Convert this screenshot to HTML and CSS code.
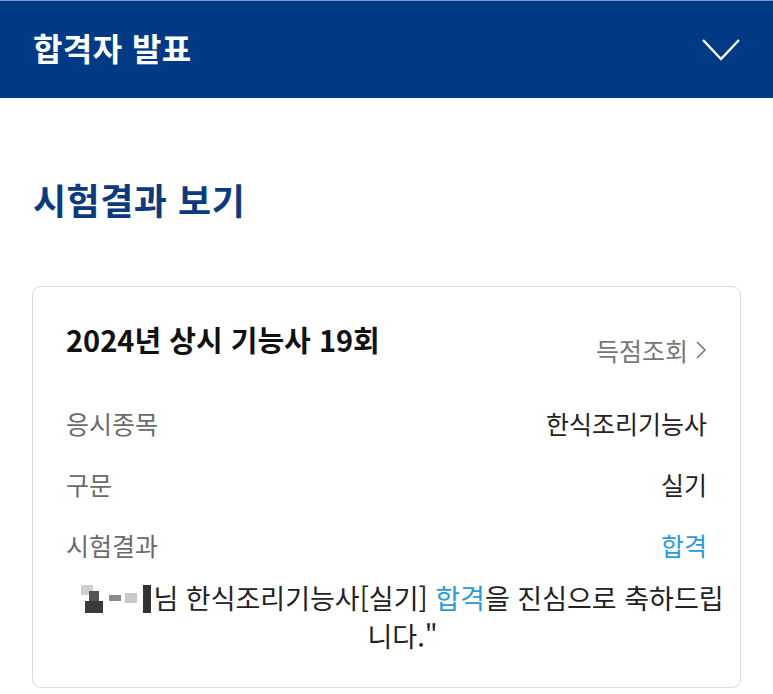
FILE: index.html
```html
<!DOCTYPE html>
<html lang="ko">
<head>
<meta charset="utf-8">
<link rel="stylesheet" href="styles.css">
</head>
<body>
<header class="top">
  <h1 class="top-title">합격자 발표</h1>
  <svg class="chev" width="40" height="24" viewBox="0 0 40 24"><path d="M2 2 L20 21 L38 2" fill="none" stroke="#fff" stroke-width="2.4"/></svg>
</header>
<main class="content">
  <h2 class="section-title">시험결과 보기</h2>
  <section class="card">
    <div class="card-head">
      <h3 class="card-title">2024년 상시 기능사 19회</h3>
      <a class="score-link">득점조회<svg class="arrow" width="12" height="22" viewBox="0 0 12 22"><path d="M2 3 L10 11 L2 19" fill="none" stroke="#777" stroke-width="1.6"/></svg></a>
    </div>
    <div class="row"><span class="label">응시종목</span><span class="value">한식조리기능사</span></div>
    <div class="row"><span class="label">구문</span><span class="value">실기</span></div>
    <div class="row"><span class="label">시험결과</span><span class="value pass">합격</span></div>
    <p class="message"><span class="blur"><i class="b1"></i><i class="b2"></i><i class="b3"></i><i class="b4"></i><i class="b5"></i><i class="b6"></i></span>님 한식조리기능사[실기] <span class="pass">합격</span>을 진심으로 축하드립니다."</p>
  </section>
</main>
</body>
</html>
```
FILE: styles.css
```css
* { box-sizing: border-box; }
html, body { margin: 0; padding: 0; background: #fff; }
body { font-family: "Noto Sans CJK KR", "Noto Sans", sans-serif; color: #1a1a1a; }
.top {
  height: 98px;
  background: #003a85;
  border-top: 1px solid #7d98c4;
  display: flex;
  align-items: center;
  justify-content: space-between;
  padding: 0 32px 6px 33px;
}
.top-title { margin: 0; color: #fff; font-size: 32px; font-weight: 700; line-height: 44px; letter-spacing: 0.4px; }
.chev { display: block; margin-top: 6px; }
.content { padding: 0 32px; }
.section-title {
  margin: 71px 0 0 1px;
  color: #0c3a7e;
  font-size: 36px;
  font-weight: 700;
  line-height: 60px;
  letter-spacing: 0.5px;
}
.card {
  margin-top: 57px;
  border: 1.5px solid #dcdcdc;
  border-radius: 9px;
  padding: 32px 33px 32px 33px;
}
.card-head { display: flex; justify-content: space-between; align-items: flex-start; height: 73px; }
.card-title { margin: 0; font-size: 29px; font-weight: 700; line-height: 40px; color: #111; letter-spacing: 0; }
.score-link { display: flex; align-items: center; gap: 7px; color: #777; font-size: 25px; line-height: 36px; margin-top: 13px; }
.arrow { display: block; }
.row { display: flex; justify-content: space-between; align-items: center; height: 61px; font-size: 25px; }
.label { color: #6b6b6b; }
.value { color: #222; }
.pass { color: #2a9ad8; }
.message { margin: 4px -22px 0 10px; text-align: center; font-size: 27px; line-height: 38px; color: #222; }
.blur { display: inline-block; position: relative; width: 72px; height: 30px; vertical-align: -6px; }
.blur i { position: absolute; display: block; }
.b1 { left: 0; top: 0; width: 12px; height: 10px; background: #cfcfcf; }
.b2 { left: 8px; top: 6px; width: 10px; height: 10px; background: #555; }
.b3 { left: 4px; top: 16px; width: 18px; height: 12px; background: #3a3a3a; }
.b4 { left: 28px; top: 10px; width: 12px; height: 6px; background: #8a8a8a; }
.b5 { left: 44px; top: 8px; width: 12px; height: 10px; background: #c9c9c9; }
.b6 { left: 62px; top: 0; width: 8px; height: 28px; background: #333; }
```
